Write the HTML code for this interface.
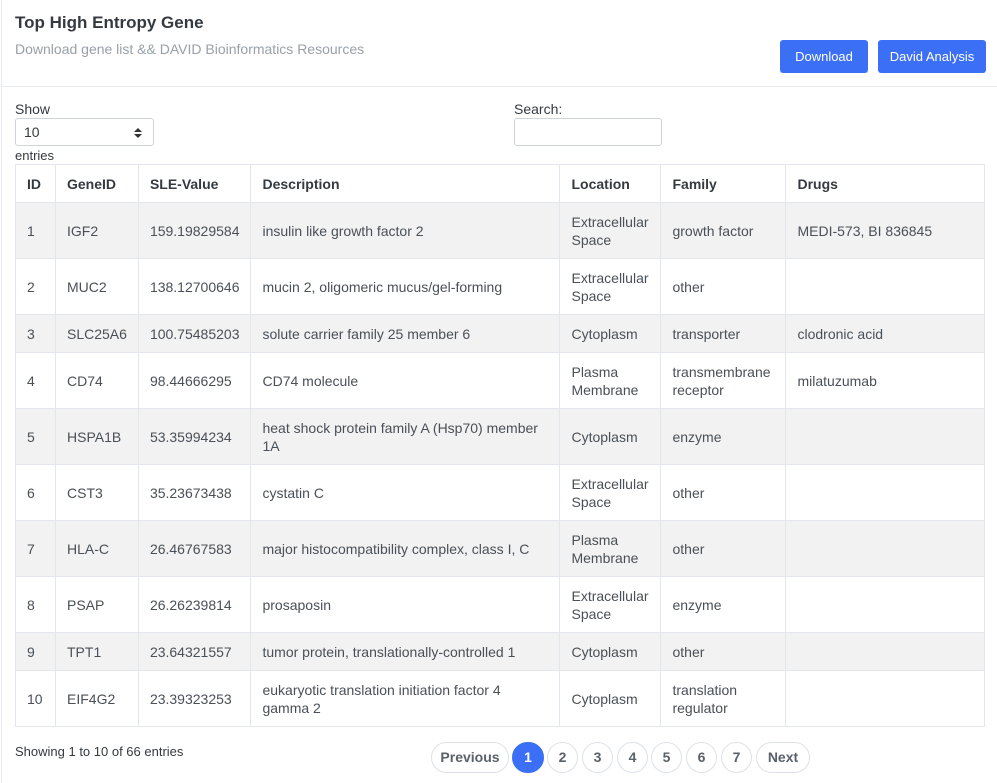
<!DOCTYPE html>
<html><head><style>
*{box-sizing:border-box}
body{margin:0;width:997px;height:783px;background:#fff;font-family:"Liberation Sans",sans-serif;color:#495057;font-size:14px;position:relative;overflow:hidden}
.frame{position:absolute;left:1px;top:0;right:0;bottom:0;border-left:1px solid #e9ecef}
h1{position:absolute;left:15px;top:13px;margin:0;font-size:17px;font-weight:bold;color:#343a40}
.sub{position:absolute;left:15px;top:41px;font-size:14px;color:#98a0a8}
.hdr{position:absolute;left:1px;right:0;top:86px;border-top:1px solid #e9ecef}
.btn{position:absolute;top:40px;height:33px;background:#3b6ff5;color:#fff;border-radius:3px;font-size:13px;line-height:33px;text-align:center}
.lbl{position:absolute;font-size:14px;color:#343a40}
.sel{position:absolute;left:15px;top:118px;width:139px;height:28px;border:1px solid #ced4da;border-radius:3px;padding-left:8px;line-height:26px;color:#343a40}
.sel:after{content:"";position:absolute;right:11px;top:9px;border:4px solid transparent;border-bottom:4px solid #333;border-top:0}
.sel:before{content:"";position:absolute;right:11px;top:15px;border:4px solid transparent;border-top:4px solid #333;border-bottom:0}
.search{position:absolute;left:514px;top:118px;width:148px;height:28px;border:1px solid #ced4da;border-radius:3px}
table{position:absolute;left:15px;top:164px;width:970px;border-collapse:collapse;font-size:14px}
td,th{border:1px solid #e3e6ea;padding:0 11px;text-align:left;line-height:18px;color:#495057}
th{height:38px;color:#343a40;font-weight:bold}
tbody tr:nth-child(odd){background:#f2f2f2}
tr.t td{height:56px}tr.s td{height:38px}
.pg{position:absolute;top:742px;height:31px;border:1px solid #dee2e6;border-radius:16px;text-align:center;line-height:29px;font-weight:bold;font-size:14px;color:#5a6169}
.on{background:#3b6ff5;border-color:#3b6ff5;color:#fff}
</style></head><body>
<div class="frame"></div>
<h1>Top High Entropy Gene</h1>
<div class="sub">Download gene list &amp;&amp; DAVID Bioinformatics Resources</div>
<div class="btn" style="left:780px;width:88px">Download</div>
<div class="btn" style="left:878px;width:108px">David Analysis</div>
<div class="hdr"></div>
<div class="lbl" style="left:15px;top:101px">Show</div>
<div class="sel">10</div>
<div class="lbl" style="left:15px;top:148px;font-size:13px">entries</div>
<div class="lbl" style="left:514px;top:101px">Search:</div>
<div class="search"></div>
<table>
<colgroup><col style="width:40px"><col style="width:78px"><col style="width:111px"><col style="width:309px"><col style="width:101px"><col style="width:125px"><col></colgroup>
<thead><tr><th>ID</th><th>GeneID</th><th>SLE-Value</th><th>Description</th><th>Location</th><th>Family</th><th>Drugs</th></tr></thead>
<tbody>
<tr class="t"><td>1</td><td>IGF2</td><td>159.19829584</td><td>insulin like growth factor 2</td><td>Extracellular Space</td><td>growth factor</td><td>MEDI-573, BI 836845</td></tr>
<tr class="t"><td>2</td><td>MUC2</td><td>138.12700646</td><td>mucin 2, oligomeric mucus/gel-forming</td><td>Extracellular Space</td><td>other</td><td></td></tr>
<tr class="s"><td>3</td><td>SLC25A6</td><td>100.75485203</td><td>solute carrier family 25 member 6</td><td>Cytoplasm</td><td>transporter</td><td>clodronic acid</td></tr>
<tr class="t"><td>4</td><td>CD74</td><td>98.44666295</td><td>CD74 molecule</td><td>Plasma Membrane</td><td>transmembrane receptor</td><td>milatuzumab</td></tr>
<tr class="t"><td>5</td><td>HSPA1B</td><td>53.35994234</td><td>heat shock protein family A (Hsp70) member 1A</td><td>Cytoplasm</td><td>enzyme</td><td></td></tr>
<tr class="t"><td>6</td><td>CST3</td><td>35.23673438</td><td>cystatin C</td><td>Extracellular Space</td><td>other</td><td></td></tr>
<tr class="t"><td>7</td><td>HLA-C</td><td>26.46767583</td><td>major histocompatibility complex, class I, C</td><td>Plasma Membrane</td><td>other</td><td></td></tr>
<tr class="t"><td>8</td><td>PSAP</td><td>26.26239814</td><td>prosaposin</td><td>Extracellular Space</td><td>enzyme</td><td></td></tr>
<tr class="s"><td>9</td><td>TPT1</td><td>23.64321557</td><td>tumor protein, translationally-controlled 1</td><td>Cytoplasm</td><td>other</td><td></td></tr>
<tr class="t"><td>10</td><td>EIF4G2</td><td>23.39323253</td><td>eukaryotic translation initiation factor 4 gamma 2</td><td>Cytoplasm</td><td>translation regulator</td><td></td></tr>
</tbody></table>
<div class="lbl" style="left:15px;top:744px;font-size:13px">Showing 1 to 10 of 66 entries</div>
<div class="pg" style="left:431px;width:78px">Previous</div>
<div class="pg on" style="left:512px;width:32px">1</div>
<div class="pg" style="left:547px;width:31px">2</div>
<div class="pg" style="left:582px;width:31px">3</div>
<div class="pg" style="left:617px;width:31px">4</div>
<div class="pg" style="left:651px;width:31px">5</div>
<div class="pg" style="left:686px;width:31px">6</div>
<div class="pg" style="left:721px;width:31px">7</div>
<div class="pg" style="left:756px;width:54px">Next</div>
</body></html>
